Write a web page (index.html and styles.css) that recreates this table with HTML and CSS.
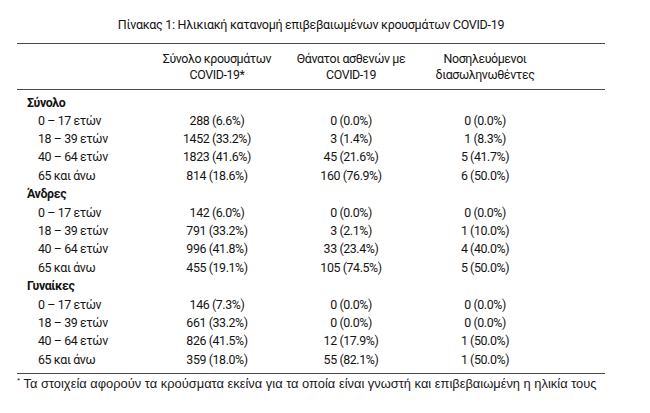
FILE: index.html
```html
<!DOCTYPE html>
<html lang="el">
<head>
<meta charset="utf-8">
<link rel="stylesheet" href="styles.css">
</head>
<body>
<div class="page">
  <h1 class="title">Πίνακας 1: Ηλικιακή κατανομή επιβεβαιωμένων κρουσμάτων COVID-19</h1>
  <table class="stats">
    <colgroup>
      <col class="c-label"><col class="c-total"><col class="c-deaths"><col class="c-icu"><col class="c-pad">
    </colgroup>
    <thead>
      <tr>
        <th></th>
        <th>Σύνολο κρουσμάτων<br>COVID-19*</th>
        <th>Θάνατοι ασθενών με<br>COVID-19</th>
        <th>Νοσηλευόμενοι<br>διασωληνωθέντες</th>
        <th></th>
      </tr>
    </thead>
    <tbody class="first">
      <tr class="sec"><td colspan="5">Σύνολο</td></tr>
      <tr><td class="age">0 – 17 ετών</td><td>288 (6.6%)</td><td>0 (0.0%)</td><td>0 (0.0%)</td><td></td></tr>
      <tr><td class="age">18 – 39 ετών</td><td>1452 (33.2%)</td><td>3 (1.4%)</td><td>1 (8.3%)</td><td></td></tr>
      <tr><td class="age">40 – 64 ετών</td><td>1823 (41.6%)</td><td>45 (21.6%)</td><td>5 (41.7%)</td><td></td></tr>
      <tr><td class="age">65 και άνω</td><td>814 (18.6%)</td><td>160 (76.9%)</td><td>6 (50.0%)</td><td></td></tr>
    </tbody>
    <tbody>
      <tr class="sec"><td colspan="5">Άνδρες</td></tr>
      <tr><td class="age">0 – 17 ετών</td><td>142 (6.0%)</td><td>0 (0.0%)</td><td>0 (0.0%)</td><td></td></tr>
      <tr><td class="age">18 – 39 ετών</td><td>791 (33.2%)</td><td>3 (2.1%)</td><td>1 (10.0%)</td><td></td></tr>
      <tr><td class="age">40 – 64 ετών</td><td>996 (41.8%)</td><td>33 (23.4%)</td><td>4 (40.0%)</td><td></td></tr>
      <tr><td class="age">65 και άνω</td><td>455 (19.1%)</td><td>105 (74.5%)</td><td>5 (50.0%)</td><td></td></tr>
    </tbody>
    <tbody class="last">
      <tr class="sec"><td colspan="5">Γυναίκες</td></tr>
      <tr><td class="age">0 – 17 ετών</td><td>146 (7.3%)</td><td>0 (0.0%)</td><td>0 (0.0%)</td><td></td></tr>
      <tr><td class="age">18 – 39 ετών</td><td>661 (33.2%)</td><td>0 (0.0%)</td><td>0 (0.0%)</td><td></td></tr>
      <tr><td class="age">40 – 64 ετών</td><td>826 (41.5%)</td><td>12 (17.9%)</td><td>1 (50.0%)</td><td></td></tr>
      <tr><td class="age">65 και άνω</td><td>359 (18.0%)</td><td>55 (82.1%)</td><td>1 (50.0%)</td><td></td></tr>
    </tbody>
  </table>
  <p class="note"><sup>*</sup> Τα στοιχεία αφορούν τα κρούσματα εκείνα για τα οποία είναι γνωστή και επιβεβαιωμένη η ηλικία τους</p>
</div>
</body>
</html>
```
FILE: styles.css
```css
* { box-sizing: border-box; }
html, body { margin: 0; padding: 0; background: #fff; }
body {
  font-family: Roboto, "Open Sans", sans-serif;
  color: #141414;
}
.page {
  width: 588px;
  margin-left: 17px;
  padding-top: 16px;
}
.title {
  margin: 0 0 9px;
  font-size: 12.5px;
  letter-spacing: -0.3px;
  font-weight: 400;
  line-height: 18px;
  text-align: center;
}
.stats {
  width: 588px;
  border-collapse: collapse;
  font-size: 12.4px;
  letter-spacing: -0.4px;
}
.c-label { width: 133px; }
.c-total { width: 134px; }
.c-deaths { width: 134px; }
.c-icu { width: 134px; }
.c-pad { width: 53px; }
.stats thead th {
  font-weight: 400;
  text-align: center;
  line-height: 16.5px;
  padding: 6.5px 0 5px;
  border-top: 1.5px solid #4a4a4a;
  border-bottom: 1.5px solid #4a4a4a;
}
.stats td {
  padding: 0;
  height: 18.4px;
  line-height: 18px;
  text-align: center;
  white-space: nowrap;
}
.stats tbody.first tr:first-child td { padding-top: 4px; height: 22px; }
.stats tbody.last tr:last-child td { border-bottom: 1.5px solid #4a4a4a; height: 22px; padding-bottom: 4px; }
.stats tr.sec td {
  text-align: left;
  font-weight: 700;
  padding-left: 10px;
}
.stats td.age {
  text-align: left;
  padding-left: 21px;
}
.note {
  margin: 2px 0 0;
  font-family: "Liberation Sans", Arial, sans-serif;
  font-size: 12.9px;
  line-height: 16px;
  color: #1a1a1a;
}
.note sup {
  font-size: 8px;
  vertical-align: 5px;
  line-height: 0;
}
```
